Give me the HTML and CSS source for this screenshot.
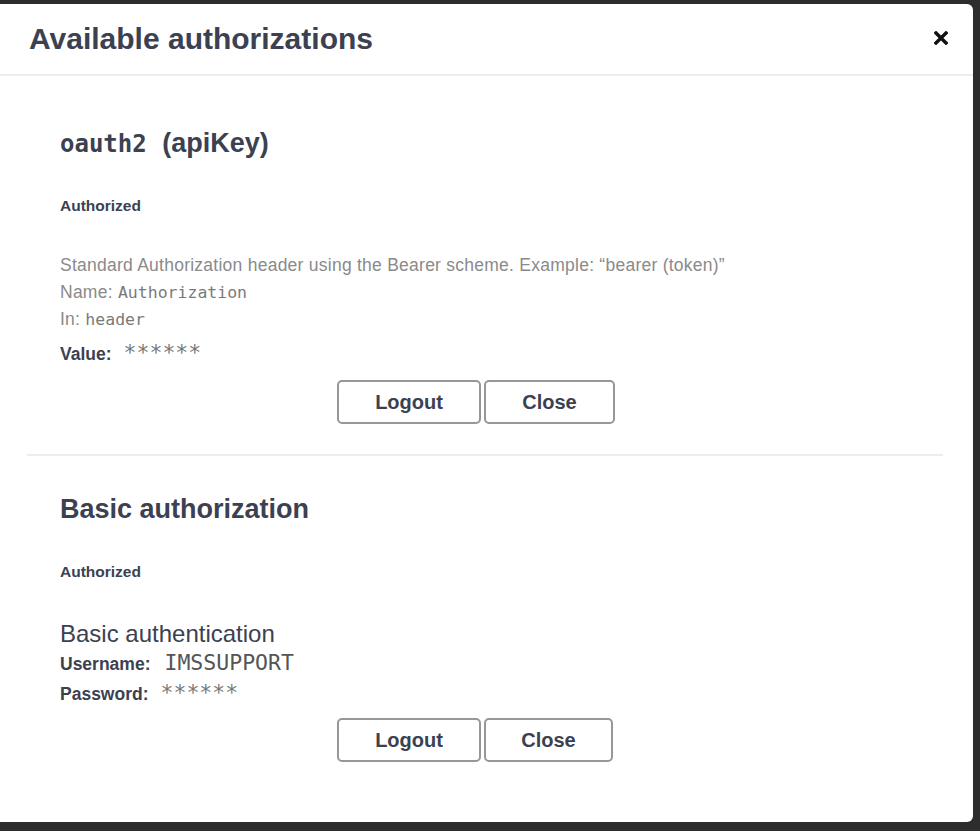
FILE: index.html
```html
<!DOCTYPE html>
<html lang="en">
<head>
<meta charset="utf-8">
<title>Available authorizations</title>
<link rel="stylesheet" href="styles.css">
</head>
<body>
<div class="modal">
  <div class="modal-header">
    <h3 class="modal-title">Available authorizations</h3>
    <button class="close-modal" aria-label="Close">
      <svg class="close-icon" viewBox="0 0 14 14" width="14" height="14"><path d="M2 2 L12 12 M12 2 L2 12" stroke="#111" stroke-width="3.4" stroke-linecap="square" fill="none"/></svg>
    </button>
  </div>
  <div class="modal-content">
    <div class="auth-container">
      <h4 class="auth-title"><code class="auth-code">oauth2</code> (apiKey)</h4>
      <h6 class="auth-status">Authorized</h6>
      <div class="auth-desc">
        <p class="desc-line">Standard Authorization header using the Bearer scheme. Example: “bearer (token)”</p>
        <p class="desc-line">Name: <code class="inline-code">Authorization</code></p>
        <p class="desc-line">In: <code class="inline-code">header</code></p>
      </div>
      <div class="field-row field-row--value"><label class="field-label">Value:</label><code class="field-value field-value--secret">******</code></div>
      <div class="btn-wrapper">
        <button class="btn btn-logout">Logout</button>
        <button class="btn btn-close">Close</button>
      </div>
    </div>
    <div class="auth-container auth-container--last">
      <h4 class="auth-title">Basic authorization</h4>
      <h6 class="auth-status">Authorized</h6>
      <div class="basic-title">Basic authentication</div>
      <div class="field-row"><label class="field-label">Username:</label><code class="field-value">IMSSUPPORT</code></div>
      <div class="field-row"><label class="field-label">Password:</label><code class="field-value field-value--secret">******</code></div>
      <div class="btn-wrapper btn-wrapper--tight">
        <button class="btn btn-logout">Logout</button>
        <button class="btn btn-close btn-close--narrow">Close</button>
      </div>
    </div>
  </div>
</div>
</body>
</html>
```
FILE: styles.css
```css
html, body {
  margin: 0;
  background: #2d2d2d;
}
body {
  padding-top: 4px;
  font-family: "Liberation Sans", Arial, sans-serif;
  color: #3b4151;
}
.modal {
  width: 973px;
  height: 818px;
  background: #fff;
  border-radius: 0 6px 6px 0;
  box-sizing: border-box;
}
.modal-header {
  height: 70px;
  border-bottom: 2px solid #ededed;
  display: flex;
  justify-content: space-between;
  align-items: flex-start;
  padding: 0 25px 0 29px;
}
.modal-title {
  margin: 0;
  font-size: 30px;
  font-weight: 700;
  line-height: 70px;
  color: #3b4151;
}
.close-modal {
  border: 0;
  background: none;
  padding: 0;
  margin-top: 27px;
  width: 14px;
  height: 14px;
  display: flex;
}
.modal-content {
  padding: 0 30px 0 27px;
}
.auth-container {
  padding: 50px 0 30px 33px;
  border-bottom: 2px solid #ededed;
}
.auth-container--last {
  padding-top: 36px;
  border-bottom: 0;
}
.auth-title {
  margin: 0;
  height: 34px;
  font-size: 27px;
  font-weight: 700;
  line-height: 34px;
  color: #3b4151;
}
.auth-code {
  font-family: "DejaVu Sans Mono", monospace;
  font-size: 24px;
  font-weight: 700;
  margin-right: 8px;
}
.auth-status {
  margin: 36px 0 0;
  height: 20px;
  font-size: 15.5px;
  font-weight: 700;
  line-height: 20px;
  color: #3b4151;
}
.auth-desc {
  margin-top: 36px;
}
.desc-line {
  margin: 0;
  height: 27px;
  font-size: 17.5px;
  letter-spacing: 0.25px;
  line-height: 27px;
  color: #8a8a8a;
}
.inline-code {
  font-family: "DejaVu Sans Mono", monospace;
  font-size: 16.5px;
  letter-spacing: 0;
  color: #7a7a7a;
}
.field-row {
  height: 30px;
  line-height: 30px;
  display: flex;
  align-items: baseline;
}
.field-row--value {
  margin-top: 6px;
  height: 27px;
  line-height: 27px;
}
.field-label {
  font-size: 17.5px;
  font-weight: 700;
  color: #3b4151;
}
.field-value {
  font-family: "DejaVu Sans Mono", monospace;
  font-size: 21.5px;
  color: #555;
  margin-left: 14px;
}
.field-value--secret {
  color: #777;
  margin-left: 12px;
}
.basic-title {
  margin-top: 38px;
  height: 28px;
  font-size: 24px;
  line-height: 28px;
  color: #3b4151;
}
.btn-wrapper {
  display: flex;
  justify-content: center;
  gap: 3px;
  padding: 14px 51px 0 0;
}
.btn-wrapper--tight {
  padding-top: 10px;
  padding-right: 53px;
}
.btn {
  width: 144px;
  height: 44px;
  box-sizing: border-box;
  border: 2px solid #979797;
  border-radius: 5px;
  background: #fff;
  padding: 0;
  font-family: "Liberation Sans", Arial, sans-serif;
  font-size: 20px;
  font-weight: 700;
  color: #3b4151;
}
.btn-close {
  width: 131px;
}
.btn-close--narrow {
  width: 129px;
}
```
